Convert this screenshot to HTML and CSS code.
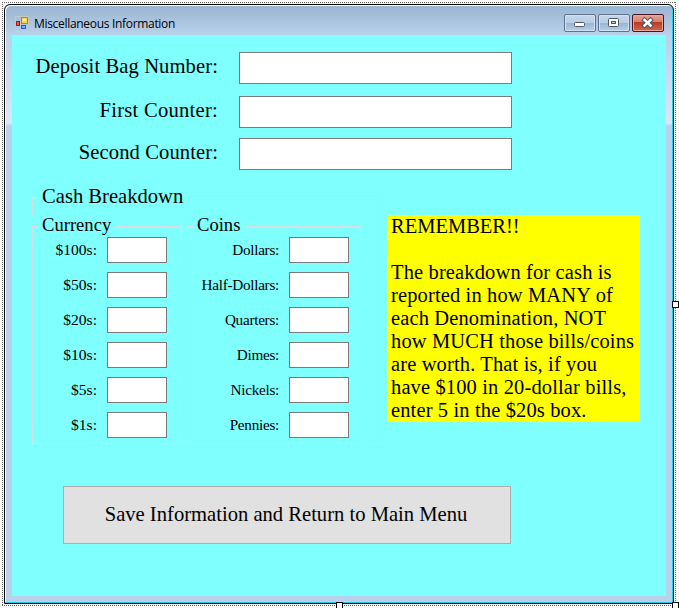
FILE: index.html
```html
<!DOCTYPE html>
<html lang="en">
<head>
<meta charset="utf-8">
<title>Miscellaneous Information</title>
<link rel="stylesheet" href="styles.css">
</head>
<body>
<div class="designer">
  <svg class="selection" width="679" height="608" shape-rendering="crispEdges">
    <path d="M2 2.5H675M2 605.5H675M2.5 2V605M675.5 2V605" stroke="#666" stroke-dasharray="1 1" fill="none"/>
    <g fill="#fff" stroke="#000"><rect x="672.5" y="301.500" width="6" height="6"/><rect x="336.500" y="602.500" width="6" height="6"/><rect x="672.500" y="602.500" width="6" height="6"/></g>
  </svg>
  <div class="window">
    <header class="titlebar">
      <svg class="app-icon" width="14" height="14" viewBox="0 0 14 14" shape-rendering="crispEdges">
        <rect x=".5" y=".5" width="13" height="13" fill="none" stroke="#c3c8cf"/>
        <rect x="6.500" y="1.500" width="6" height="6" fill="#ffd34a" stroke="#b98a10"/>
        <rect x="8" y="3" width="3" height="2" fill="#fff0a8"/>
        <rect x="1.500" y="5.500" width="3" height="4" fill="#e2553e" stroke="#a91c12"/>
        <rect x="6.500" y="9.500" width="4" height="3" fill="#79a8f5" stroke="#2c5fc4"/>
      </svg>
      <span class="title">Miscellaneous Information</span>
      <div class="controls">
        <span class="control"><svg width="30" height="16"><rect x="9.500" y="7.500" width="10" height="4" rx="1" fill="#fff" stroke="#535666"/></svg></span>
        <span class="control"><svg width="30" height="16"><rect x="9.500" y="3.500" width="10" height="8" rx="1" fill="#fff" stroke="#535666"/><rect x="12.500" y="6.500" width="4" height="2" fill="#b2cae3" stroke="#535666"/></svg></span>
        <span class="control close"><svg width="30" height="16"><path d="M11.500 5L17.500 10.500M17.500 5L11.500 10.500" stroke="#535666" stroke-width="4.500" stroke-linecap="square"/><path d="M11.500 5L17.500 10.500M17.500 5L11.500 10.500" stroke="#fff" stroke-width="2.500" stroke-linecap="square"/></svg></span>
      </div>
    </header>
    <main class="client">
      <section class="fields">
        <label>Deposit Bag Number:</label><div class="box"></div>
        <label class="first">First Counter:</label><div class="box"></div>
        <label>Second Counter:</label><div class="box"></div>
      </section>
      <section class="middle">
        <div class="cash">
          <span class="legend">Cash Breakdown</span>
          <div class="groups">
            <div class="group currency"><div class="frame">
              <span class="legend">Currency</span>
              <div class="rows">
                <label>$100s:</label><div class="box"></div>
                <label>$50s:</label><div class="box"></div>
                <label>$20s:</label><div class="box"></div>
                <label>$10s:</label><div class="box"></div>
                <label>$5s:</label><div class="box"></div>
                <label>$1s:</label><div class="box"></div>
              </div>
            </div></div>
            <div class="group coins"><div class="frame">
              <span class="legend">Coins</span>
              <div class="rows">
                <label>Dollars:</label><div class="box"></div>
                <label>Half-Dollars:</label><div class="box"></div>
                <label>Quarters:</label><div class="box"></div>
                <label>Dimes:</label><div class="box"></div>
                <label>Nickels:</label><div class="box"></div>
                <label>Pennies:</label><div class="box"></div>
              </div>
            </div></div>
          </div>
        </div>
        <div class="note">REMEMBER!!<br><br><span>The breakdown for cash is<br>reported in how MANY of<br>each Denomination, NOT<br>how MUCH those bills/coins<br>are worth. That is, if you<br>have $100 in 20-dollar bills,<br>enter 5 in the $20s box.</span></div>
      </section>
      <button class="save">Save Information and Return to Main Menu</button>
    </main>
  </div>
</div>
</body>
</html>
```
FILE: styles.css
```css
* { box-sizing: border-box; }
body { margin: 0; background: #f7f7f7; color: #000; font-family: "Liberation Serif", serif; overflow: hidden; }
.designer { position: relative; width: 679px; height: 608px; padding: 4px; }
.selection { position: absolute; left: 0; top: 0; z-index: 1; }
.window {
  width: 670px; height: 600px; padding: 0 6px;
  border: 1px solid #000; border-radius: 6px 6px 0 0;
  background: linear-gradient(#99b4d1 0, #b9d1ea 30px, #dce7f5 118px, #b9d1ea 121px);
  box-shadow: inset -1px -1px #22cfee, inset 1px 1px #fff;
}
.titlebar { display: flex; height: 30px; padding-left: 4px; }
.app-icon { margin-top: 11px; flex: none; }
.title { margin: 11px 0 0 5px; font: 12px/16px "Open Sans", sans-serif; letter-spacing: -0.31px; white-space: nowrap; }
.controls { display: flex; gap: 2px; margin: 9px 3px 0 auto; }
.control {
  width: 32px; height: 18px; border: 1px solid #5e718c; border-radius: 2px;
  background: linear-gradient(#c4d6ea 0, #b8cde4 50%, #98b4d2 50%, #b6d0e8 100%);
  box-shadow: inset 0 0 0 1px #d3e2f2;
}
.control svg { display: block; }
.close { border-color: #4a1420; background: linear-gradient(#e5a395 0, #d57c6c 46%, #b93a25 46%, #cf6a4b 100%); box-shadow: inset 0 0 0 1px #e7a79c; }
.client { height: 561px; margin: 0 1px; background: #80ffff; padding-top: 17px; }
.box { background: #fff; border: 1px solid #7a7a7a; }
.fields {
  display: grid; grid-template-columns: 206px 273px; grid-template-rows: 33px 31px 32px;
  column-gap: 21px; row-gap: 11px; font-size: 20.6px; letter-spacing: 0.09px;
}
.fields label { text-align: right; line-height: 29px; white-space: nowrap; }
.fields .first { letter-spacing: 0.25px; }
.fields .box { height: 32px; }
.middle { display: flex; height: 247px; margin: 27px 0 0 20px; }
.cash { width: 350px; border: 1px solid #d8dfe1; }
.legend { display: block; width: fit-content; background: #80ffff; white-space: nowrap; }
.cash > .legend { margin: -14px 0 0 7px; padding: 0 4px 0 2px; font-size: 20.6px; line-height: 24px; height: 24px; width: 147px; }
.groups { display: flex; gap: 5px; margin: 7px 0 0 -1px; }
.group { height: 229px; padding-top: 11px; background: #80ffff; }
.currency { width: 150px; }
.coins { width: 175px; }
.frame { height: 218px; border: 1px solid #d8dfe1; border-top-width: 2px; }
.frame .legend { width: 77px; height: 20px; margin: -12px 0 0 5px; padding-left: 4px; font-size: 18.6px; line-height: 18px; }
.coins .legend { width: 52px; margin-left: 6px; padding-left: 3px; }
.rows { display: grid; grid-template-columns: 64px 60px; grid-auto-rows: 26px; column-gap: 10px; row-gap: 9px; margin-top: 1px; font-size: 15.6px; }
.coins .rows { grid-template-columns: 91px 60px; font-size: 15.2px; letter-spacing: -0.27px; }
.rows label { text-align: right; line-height: 26px; white-space: nowrap; }
.note { width: 253px; height: 207px; margin: 18px 0 0 5px; padding-left: 4px; background: #ff0; font-size: 20.5px; line-height: 23px; white-space: nowrap; }
.note span { letter-spacing: 0.13px; }
.save { display: block; width: 448px; height: 58px; margin: 42px 0 0 51px; padding: 0 2px 2px 0; background: #e1e1e1; border: 1px solid #adadad; color: #000; font: 20.6px "Liberation Serif", serif; white-space: nowrap; }
```
